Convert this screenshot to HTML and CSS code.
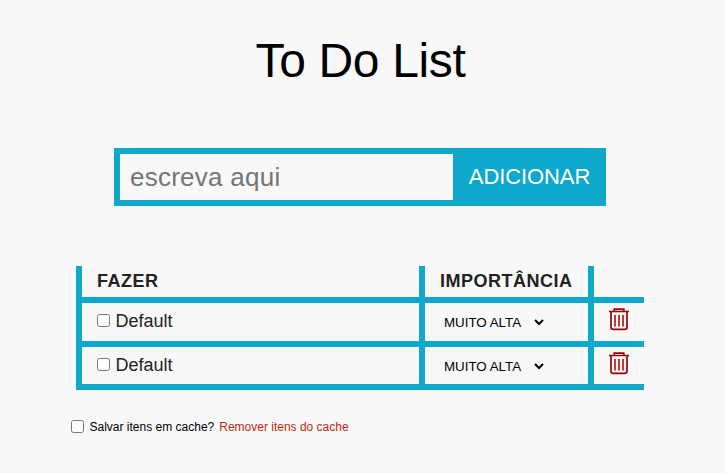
FILE: index.html
```html
<!DOCTYPE html>
<html lang="pt-BR">
<head>
<meta charset="utf-8">
<title>To Do List</title>
<link rel="stylesheet" href="styles.css">
</head>
<body>
<svg width="0" height="0" class="sprite" aria-hidden="true">
  <symbol id="trash" viewBox="0 0 20 23">
    <path d="M0 3.5H20M5.2 3V1.2H14.8V3M2 4V19.5Q2 21.3 4.5 21.3H15.5Q18 21.3 18 19.5V4" fill="none" stroke="currentColor" stroke-width="1.7"/>
    <path d="M6 7V18.5M10 7V18.5M14 7V18.5" fill="none" stroke="currentColor" stroke-width="1.5"/>
  </symbol>
</svg>
<h1 class="title">To Do List</h1>
<form class="add">
  <input class="add-input" type="text" placeholder="escreva aqui">
  <button class="add-button" type="button">ADICIONAR</button>
</form>
<main class="list">
  <div class="cell head">FAZER</div>
  <div class="cell head">IMPORTÂNCIA</div>
  <div class="cell head"></div>

  <label class="cell task"><input class="check" type="checkbox"><span>Default</span></label>
  <div class="cell level"><select class="select"><option>MUITO ALTA</option></select></div>
  <div class="cell remove"><svg class="icon"><use href="#trash"/></svg></div>

  <label class="cell task"><input class="check" type="checkbox"><span>Default</span></label>
  <div class="cell level"><select class="select"><option>MUITO ALTA</option></select></div>
  <div class="cell remove"><svg class="icon"><use href="#trash"/></svg></div>
</main>
<footer class="cache">
  <input class="check" type="checkbox" id="save">
  <label class="save" for="save">Salvar itens em cache?</label>
  <span class="clear">Remover itens do cache</span>
</footer>
</body>
</html>
```
FILE: styles.css
```css
* { box-sizing: border-box; }
body {
  margin: 0;
  height: 473px;
  overflow: hidden;
  background: #f8f8f8;
  color: #000;
  font-family: "Liberation Sans", Arial, sans-serif;
}
.sprite { display: block; }
.title {
  margin: 33px 4px 0 0;
  font-size: 48px;
  line-height: 55px;
  font-weight: 400;
  letter-spacing: -0.35px;
  text-align: center;
}
.add {
  display: flex;
  width: 492px;
  height: 58px;
  margin: 60px 0 0 114px;
  border: 6px solid #0da8cb;
}
.add-input {
  width: 333px;
  padding: 0 10px;
  border: 0;
  background: #f8f8f8;
  font: 26px "Liberation Sans", Arial, sans-serif;
  letter-spacing: 0.25px;
}
.add-input::placeholder { color: #757575; }
.add-button {
  flex: 1;
  padding: 0 0 0 6px;
  border: 0;
  background: #0da8cb;
  color: #fff;
  font: 22px "Liberation Sans", Arial, sans-serif;
  letter-spacing: -0.1px;
}
.list {
  display: grid;
  grid-template-columns: 343px 169px 56px;
  grid-template-rows: 37px 44px 43px;
  width: 568px;
  margin: 60px 0 0 76px;
  color: #222;
}
.cell {
  display: flex;
  align-items: flex-start;
  border-left: 6px solid #0da8cb;
  border-bottom: 6px solid #0da8cb;
}
.head {
  padding: 5px 0 0 15px;
  font-size: 18px;
  line-height: 20px;
  font-weight: 700;
  letter-spacing: 0.5px;
}
.check { width: 13px; height: 13px; margin: 0; }
.task { padding: 8px 0 0 15px; gap: 5.4px; font-size: 18px; line-height: 20px; }
.task .check { margin-top: 3px; }
.level { padding: 10px 0 0 15px; }
.select {
  width: 107px;
  height: 19px;
  border: 0;
  background: transparent;
  color: #000;
  font: 13.333px "Liberation Sans", Arial, sans-serif;
}
.remove { padding: 5px 0 0 15px; }
.icon { width: 20px; height: 23px; color: #a00000; }
.cache {
  display: flex;
  align-items: flex-start;
  margin: 28px 0 0 71px;
  font-size: 12px;
  line-height: 18px;
}
.cache .check { margin-top: 2px; }
.save { margin-left: 5.5px; }
.clear { margin-left: 5px; color: #c22a0d; }
```
